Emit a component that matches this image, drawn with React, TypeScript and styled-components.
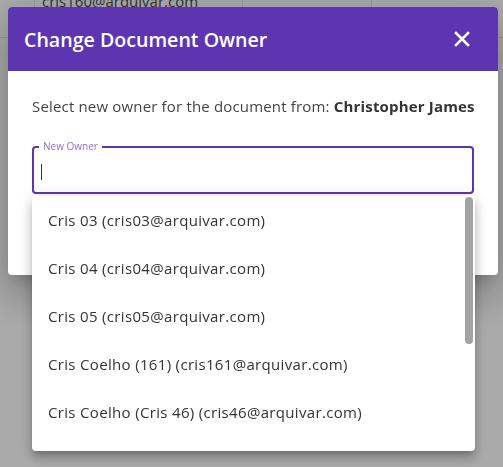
import React, { FC } from "react";
import styled, { createGlobalStyle } from "styled-components";

const GlobalStyle = createGlobalStyle`
  html, body {
    margin: 0;
    padding: 0;
    width: 503px;
    height: 467px;
    overflow: hidden;
    background: #ffffff;
    font-family: "Open Sans", "Noto Sans", sans-serif;
  }
`;

const Page = styled.div`
  width: 503px;
  height: 467px;
  background: #ffffff;
`;

const TableRow = styled.div`
  display: grid;
  grid-template-columns: 35px 208px 129px 1fr;
  height: 48px;
  margin-top: -11px;
  border-bottom: 1px solid #e4e4e4;
`;

const Cell = styled.div`
  border-right: 1px solid #e4e4e4;
  padding: 3px 7px 0;
  font-size: 15px;
  line-height: 18px;
  color: #4a4a4a;
  white-space: nowrap;
  overflow: hidden;

  &:last-child {
    border-right: none;
  }
`;

const Backdrop = styled.div`
  position: fixed;
  inset: 0;
  background: rgba(0, 0, 0, 0.335);
`;

const Dialog = styled.div`
  position: fixed;
  top: 7px;
  left: 8px;
  width: 490px;
  height: 268px;
  background: #ffffff;
  border-radius: 4px;
  box-shadow: 0 11px 15px -7px rgba(0, 0, 0, 0.2),
    0 24px 38px 3px rgba(0, 0, 0, 0.14), 0 9px 46px 8px rgba(0, 0, 0, 0.12);
`;

const Header = styled.div`
  height: 64px;
  background: #5e35b1;
  border-radius: 4px 4px 0 0;
  display: flex;
  align-items: center;
  justify-content: space-between;
  padding: 0 28px 0 16px;
`;

const Title = styled.h2`
  margin: 0;
  font-size: 19.6px;
  font-weight: 600;
  color: #ffffff;
`;

const CloseButton = styled.button`
  border: none;
  background: transparent;
  padding: 0;
  display: flex;
  cursor: pointer;
`;

const Body = styled.div`
  padding: 24px 24px 0 24px;
`;

const Prompt = styled.p`
  margin: 0;
  font-size: 15px;
  line-height: 22px;
  letter-spacing: 0.17px;
  color: #444444;
  white-space: nowrap;

  strong {
    color: #333333;
    font-weight: 700;
  }
`;

const Field = styled.div`
  position: relative;
  margin-top: 29px;
  height: 44px;
  border: 2px solid #5e35b1;
  border-radius: 4px;
  display: flex;
  align-items: center;
  padding: 0 7px;
`;

const FieldLabel = styled.span`
  position: absolute;
  top: -8px;
  left: 5px;
  padding: 0 4px;
  background: #ffffff;
  font-size: 10px;
  line-height: 12px;
  color: #8e6fd1;
`;

const Caret = styled.span`
  width: 1px;
  height: 16px;
  margin-top: 4px;
  background: #3b2a7a;
`;

const Listbox = styled.ul`
  position: absolute;
  top: 48px;
  left: -2px;
  right: -3px;
  height: 255px;
  margin: 0;
  padding: 0;
  list-style: none;
  background: #ffffff;
  border-radius: 4px;
  overflow: hidden;
  z-index: 2;
  box-shadow: 0 5px 5px -3px rgba(0, 0, 0, 0.2),
    0 8px 10px 1px rgba(0, 0, 0, 0.14), 0 3px 14px 2px rgba(0, 0, 0, 0.12);
`;

const Option = styled.li`
  height: 48px;
  display: flex;
  align-items: center;
  padding-left: 16px;
  font-size: 15px;
  letter-spacing: 0.33px;
  color: #333333;
  white-space: nowrap;
`;

const ScrollThumb = styled.div`
  position: absolute;
  top: 1px;
  right: 2px;
  width: 8px;
  height: 147px;
  border-radius: 4px;
  background: #a3a3a3;
`;

const owners = [
  "Cris 03 (cris03@arquivar.com)",
  "Cris 04 (cris04@arquivar.com)",
  "Cris 05 (cris05@arquivar.com)",
  "Cris Coelho (161) (cris161@arquivar.com)",
  "Cris Coelho (Cris 46) (cris46@arquivar.com)",
];

const CloseIcon: FC = () => (
  <svg width="16" height="16" viewBox="0 0 16 16">
    <path
      d="M2 2 L14 14 M14 2 L2 14"
      stroke="#ffffff"
      strokeWidth="2.6"
      strokeLinecap="square"
    />
  </svg>
);

const App: FC = () => {
  return (
    <>
      <GlobalStyle />
      <Page>
        <TableRow>
          <Cell />
          <Cell>cris160@arquivar.com</Cell>
          <Cell />
          <Cell />
        </TableRow>
      </Page>
      <Backdrop />
      <Dialog>
        <Header>
          <Title>Change Document Owner</Title>
          <CloseButton>
            <CloseIcon />
          </CloseButton>
        </Header>
        <Body>
          <Prompt>
            Select new owner for the document from:{" "}
            <strong>Christopher James</strong>
          </Prompt>
          <Field>
            <FieldLabel>New Owner</FieldLabel>
            <Caret />
            <Listbox>
              {owners.map((o, i) => (
                <Option key={i}>{o}</Option>
              ))}
              <ScrollThumb />
            </Listbox>
          </Field>
        </Body>
      </Dialog>
    </>
  );
};

export default App;
